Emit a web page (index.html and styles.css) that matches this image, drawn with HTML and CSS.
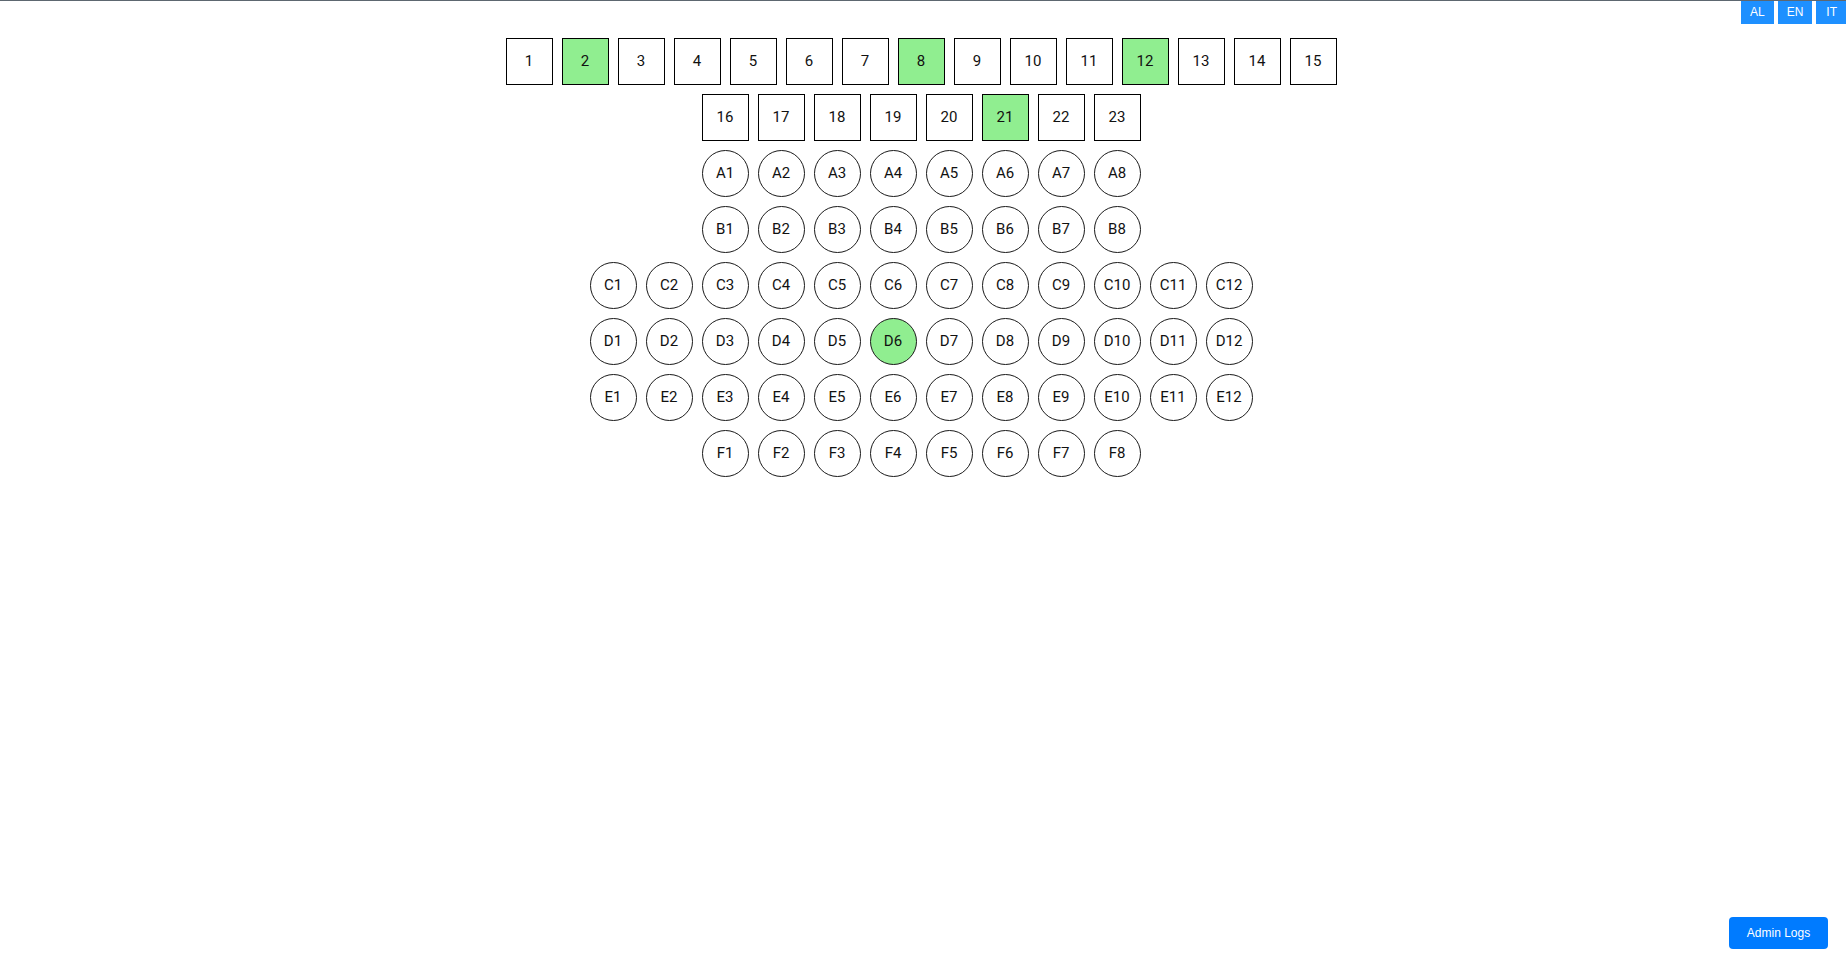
FILE: index.html
```html
<!DOCTYPE html>
<html lang="en">
<head>
<meta charset="utf-8">
<title>Seats</title>
<link rel="stylesheet" href="styles.css">
</head>
<body>
<div class="langs">
  <button class="lang">AL</button>
  <button class="lang">EN</button>
  <button class="lang">IT</button>
</div>
<main class="plan">
  <div class="row">
    <div class="seat box">1</div><div class="seat box on">2</div><div class="seat box">3</div><div class="seat box">4</div><div class="seat box">5</div><div class="seat box">6</div><div class="seat box">7</div><div class="seat box on">8</div><div class="seat box">9</div><div class="seat box">10</div><div class="seat box">11</div><div class="seat box on">12</div><div class="seat box">13</div><div class="seat box">14</div><div class="seat box">15</div>
  </div>
  <div class="row">
    <div class="seat box">16</div><div class="seat box">17</div><div class="seat box">18</div><div class="seat box">19</div><div class="seat box">20</div><div class="seat box on">21</div><div class="seat box">22</div><div class="seat box">23</div>
  </div>
  <div class="row">
    <div class="seat circ">A1</div><div class="seat circ">A2</div><div class="seat circ">A3</div><div class="seat circ">A4</div><div class="seat circ">A5</div><div class="seat circ">A6</div><div class="seat circ">A7</div><div class="seat circ">A8</div>
  </div>
  <div class="row">
    <div class="seat circ">B1</div><div class="seat circ">B2</div><div class="seat circ">B3</div><div class="seat circ">B4</div><div class="seat circ">B5</div><div class="seat circ">B6</div><div class="seat circ">B7</div><div class="seat circ">B8</div>
  </div>
  <div class="row">
    <div class="seat circ">C1</div><div class="seat circ">C2</div><div class="seat circ">C3</div><div class="seat circ">C4</div><div class="seat circ">C5</div><div class="seat circ">C6</div><div class="seat circ">C7</div><div class="seat circ">C8</div><div class="seat circ">C9</div><div class="seat circ">C10</div><div class="seat circ">C11</div><div class="seat circ">C12</div>
  </div>
  <div class="row">
    <div class="seat circ">D1</div><div class="seat circ">D2</div><div class="seat circ">D3</div><div class="seat circ">D4</div><div class="seat circ">D5</div><div class="seat circ on">D6</div><div class="seat circ">D7</div><div class="seat circ">D8</div><div class="seat circ">D9</div><div class="seat circ">D10</div><div class="seat circ">D11</div><div class="seat circ">D12</div>
  </div>
  <div class="row">
    <div class="seat circ">E1</div><div class="seat circ">E2</div><div class="seat circ">E3</div><div class="seat circ">E4</div><div class="seat circ">E5</div><div class="seat circ">E6</div><div class="seat circ">E7</div><div class="seat circ">E8</div><div class="seat circ">E9</div><div class="seat circ">E10</div><div class="seat circ">E11</div><div class="seat circ">E12</div>
  </div>
  <div class="row">
    <div class="seat circ">F1</div><div class="seat circ">F2</div><div class="seat circ">F3</div><div class="seat circ">F4</div><div class="seat circ">F5</div><div class="seat circ">F6</div><div class="seat circ">F7</div><div class="seat circ">F8</div>
  </div>
</main>
<button class="admin">Admin Logs</button>
</body>
</html>
```
FILE: styles.css
```css
html, body {
  margin: 0;
  padding: 0;
  background: #fff;
}
body {
  border-top: 1px solid #5d6770;
  min-height: 961px;
  box-sizing: border-box;
  font-family: Roboto, "Liberation Sans", Arial, sans-serif;
  color: #000;
}
.langs {
  position: absolute;
  top: 1px;
  right: 0;
  display: flex;
  gap: 4px;
}
.lang {
  height: 23px;
  padding: 0 9px;
  border: none;
  margin: 0;
  background: #1e90ff;
  color: #fff;
  font-family: "Liberation Sans", Arial, sans-serif;
  font-size: 12px;
  line-height: 23px;
  cursor: pointer;
}
.lang:last-child {
  padding: 0 9px 0 10px;
}
.plan {
  display: flex;
  flex-direction: column;
  align-items: center;
  gap: 9px;
  padding-top: 37px;
  padding-right: 4px;
}
.row {
  display: flex;
  gap: 9px;
}
.seat {
  width: 47px;
  height: 47px;
  box-sizing: border-box;
  display: flex;
  align-items: center;
  justify-content: center;
  padding-bottom: 2px;
  font-size: 15px;
  color: #111;
  background: #fff;
}
.box {
  border: 1px solid #000;
}
.circ {
  border: 1px solid #1a1a1a;
  border-radius: 50%;
}
.on {
  background: #90ee90;
}
.admin {
  position: fixed;
  right: 18px;
  bottom: 13px;
  width: 99px;
  height: 32px;
  border: none;
  border-radius: 4px;
  background: #007bff;
  color: #fff;
  font-family: "Liberation Sans", Arial, sans-serif;
  font-size: 12px;
  padding: 0;
  cursor: pointer;
}
```
